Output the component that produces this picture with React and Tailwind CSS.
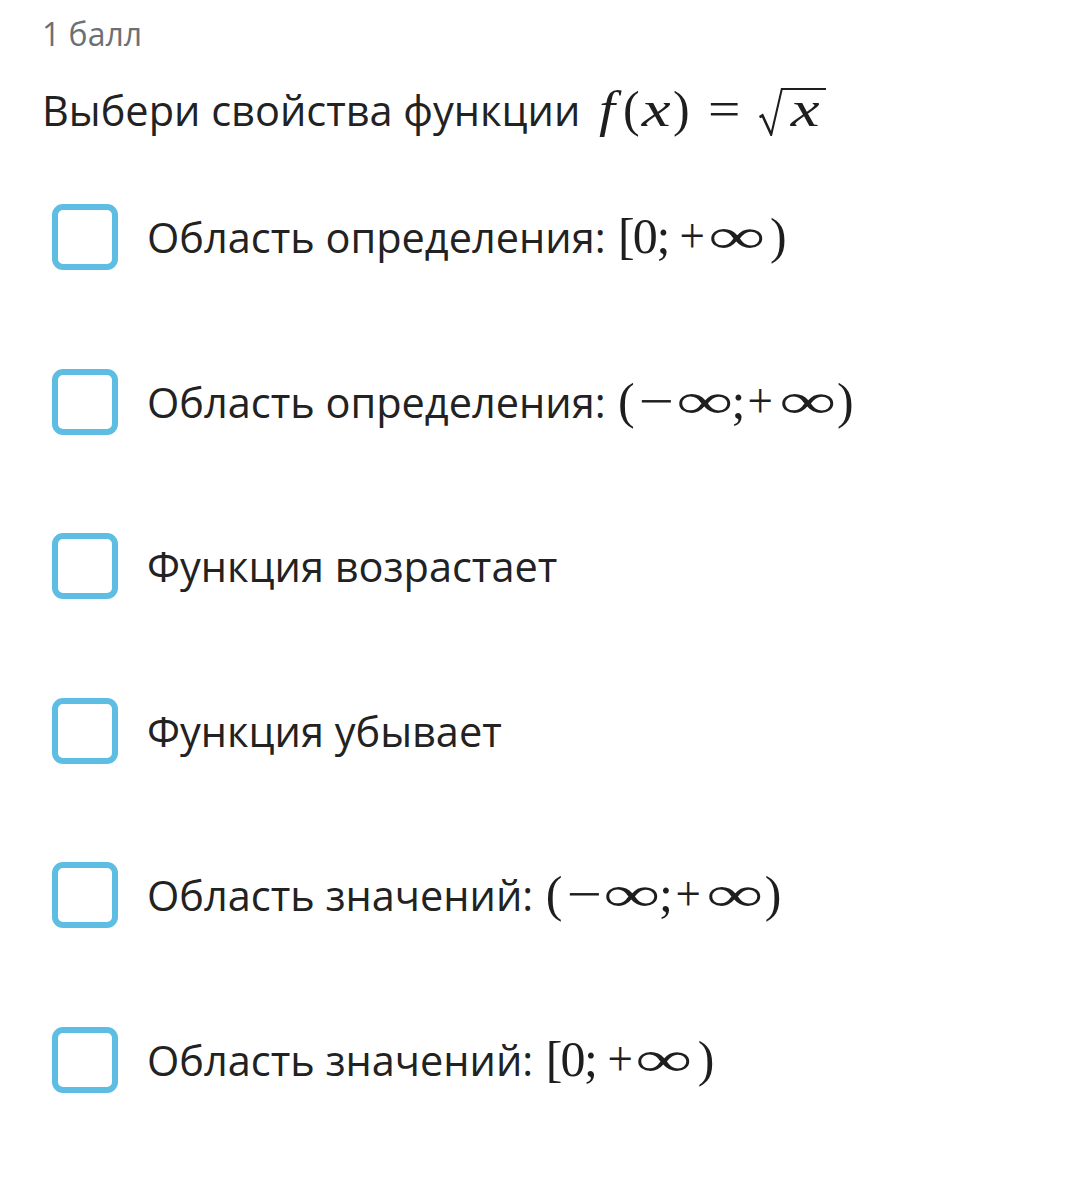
import React from "react";

const G = ({ c, w, s = "", it = false }) => (
  <span className={"inline-flex justify-center " + w}>
    <span className={"inline-block " + s + (it ? " italic" : "")}>{c}</span>
  </span>
);

const M = ({ children, cls = "" }) => (
  <span className={"inline-flex items-baseline font-['Liberation_Serif','DejaVu_Serif',serif] text-[50px] leading-none text-[#1e1e1e] " + cls}>
    {children}
  </span>
);

const INF = "scale-x-[1.6]";

const DomainZero = () => (
  <M>
    <G c="[" w="w-[20px]" />
    <G c="0" w="w-[18px]" />
    <G c=";" w="w-[18px]" />
    <G c="+" w="w-[40px]" s="scale-x-[0.9]" />
    <G c="∞" w="w-[48px]" s={INF} />
    <G c=")" w="w-[36px]" />
  </M>
);

const DomainAll = () => (
  <M>
    <G c="(" w="w-[20px]" />
    <G c="−" w="w-[40px]" s="scale-x-[1.25]" />
    <G c="∞" w="w-[56px]" s={INF} />
    <G c=";" w="w-[12px]" />
    <G c="+" w="w-[32px]" s="scale-x-[0.9]" />
    <G c="∞" w="w-[62px]" s={INF} />
    <G c=")" w="w-[14px]" />
  </M>
);

const options = [
  <>Область определения: <DomainZero /></>,
  <>Область определения: <DomainAll /></>,
  <>Функция возрастает</>,
  <>Функция убывает</>,
  <>Область значений: <DomainAll /></>,
  <>Область значений: <DomainZero /></>,
];

export default function App() {
  return (
    <div className="w-[1080px] h-[1198px] bg-white font-['Open_Sans',sans-serif] text-[#222]">
      <div className="pl-[42px] pt-[14px]">
        <div className="text-[32px] leading-[40px] text-[#6b7075]">1 балл</div>
        <div className="mt-[30px] text-[41.5px] leading-[52px] text-[#222] whitespace-nowrap">
          <span>Выбери свойства функции</span>
          <M cls="ml-[11px]">
            <G c="f" w="w-[32px]" s="scale-x-[1.15]" it />
            <G c="(" w="w-[16px]" />
            <G c="x" w="w-[33px]" s="scale-x-[1.3]" it />
            <G c=")" w="w-[18px]" />
            <G c="=" w="w-[68px]" s="scale-x-[1.15]" />
            <span className="relative inline-block w-[68px] text-right pr-[4px]">
              <svg
                width="68"
                height="50"
                viewBox="0 0 68 50"
                className="absolute left-0 top-[3px]"
              >
                <path d="M1 29 L5 26.5 L13 44 L23 1 L68 1 L68 3 L24.6 3 L14 49 L12.5 49 L4 30.5 L2 31.3 Z" fill="#1e1e1e" />
              </svg>
              <span className="inline-block italic scale-x-[1.3] mr-[6px]">x</span>
            </span>
          </M>
        </div>
        <div className="mt-[68px] flex flex-col gap-[98.6px] pl-[10px]">
          {options.map((o, i) => (
            <div key={i} className="flex items-center h-[66px]">
              <div className="w-[66px] h-[66px] border-[6px] border-[#5ebde3] rounded-[11px] shrink-0" />
              <div className="ml-[29px] text-[41.5px] leading-[52px] text-[#222] whitespace-nowrap">{o}</div>
            </div>
          ))}
        </div>
      </div>
    </div>
  );
}
